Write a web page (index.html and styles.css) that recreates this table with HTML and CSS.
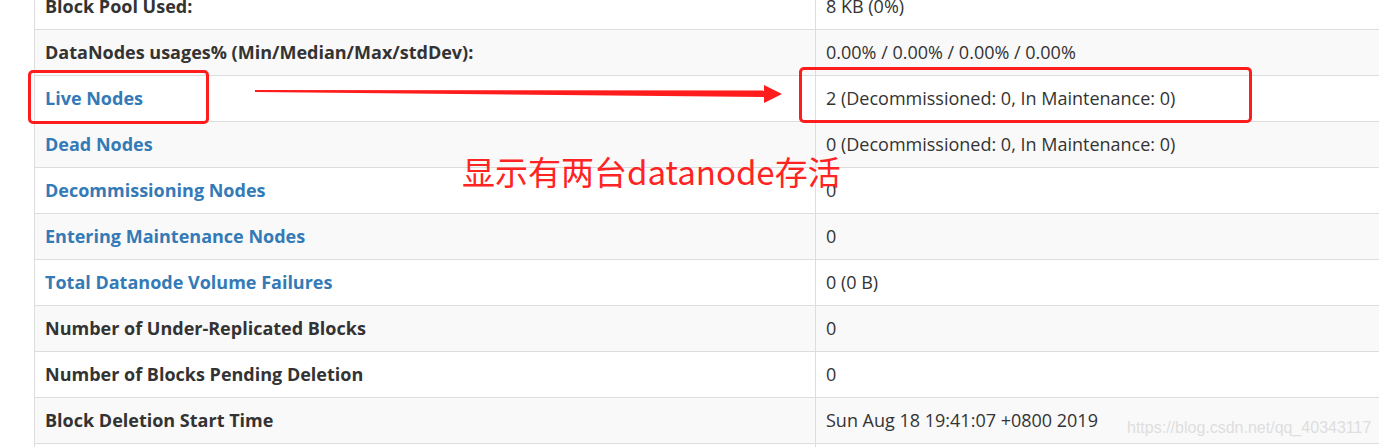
FILE: index.html
```html
<!DOCTYPE html>
<html lang="en">
<head>
    <meta charset="UTF-8">
    <title>Namenode information</title>
    <link rel="stylesheet" href="styles.css">
</head>
<body>
    <div class="page">
        <table class="summary">
            <tr><th>Block Pool Used:</th><td>8 KB (0%)</td></tr>
            <tr><th>DataNodes usages% (Min/Median/Max/stdDev):</th><td>0.00% / 0.00% / 0.00% / 0.00%</td></tr>
            <tr><th><a href="#tab-datanode">Live Nodes</a></th><td>2 (Decommissioned: 0, In Maintenance: 0)</td></tr>
            <tr><th><a href="#tab-datanode">Dead Nodes</a></th><td>0 (Decommissioned: 0, In Maintenance: 0)</td></tr>
            <tr><th><a href="#tab-datanode">Decommissioning Nodes</a></th><td>0</td></tr>
            <tr><th><a href="#tab-datanode">Entering Maintenance Nodes</a></th><td>0</td></tr>
            <tr><th><a href="#tab-datanode-volume-failures">Total Datanode Volume Failures</a></th><td>0 (0 B)</td></tr>
            <tr><th>Number of Under-Replicated Blocks</th><td>0</td></tr>
            <tr><th>Number of Blocks Pending Deletion</th><td>0</td></tr>
            <tr><th>Block Deletion Start Time</th><td>Sun Aug 18 19:41:07 +0800 2019</td></tr>
            <tr><th>Last Checkpoint Time</th><td>Sun Aug 18 19:41:07 +0800 2019</td></tr>
        </table>

        <!-- annotations drawn over the screenshot -->
        <div class="mark mark-label"></div>
        <div class="mark mark-value"></div>
        <svg class="arrow" width="1379" height="447" viewBox="0 0 1379 447">
            <polygon points="255,90 765,90.5 765,97 255,92" fill="#ff1c1c"/>
            <polygon points="764,85 782,94 764,103" fill="#ff1c1c"/>
        </svg>
        <div class="note">显示有两台datanode存活</div>
        <div class="watermark">https://blog.csdn.net/qq_40343117</div>
    </div>
</body>
</html>
```

FILE: styles.css
```css
* {
    box-sizing: border-box;
    margin: 0;
    padding: 0;
}

body {
    font-family: "Open Sans", "Noto Sans", sans-serif;
    color: #333;
    background: #fff;
    overflow: hidden;
}

a {
    color: #337ab7;
    text-decoration: none;
}

.page {
    position: relative;
    height: 447px;
    overflow: hidden;
    padding-left: 34px;
}

/* Bordered + striped table */
.summary {
    border-collapse: collapse;
    width: 1420px;
    margin-top: -17px;
}

.summary th,
.summary td {
    border: 1px solid #ddd;
    padding: 10px;
    font-size: 18px;
    line-height: 25px;
    text-align: left;
    vertical-align: top;
    white-space: nowrap;
}

.summary th {
    width: 781px;
    font-weight: 700;
}

.summary td {
    font-weight: 400;
}

.summary tr:nth-child(even) {
    background: #f9f9f9;
}

/* Red annotations */
.mark {
    position: absolute;
    border: 3px solid #ff1c1c;
    border-radius: 5px;
}

.mark-label {
    left: 28px;
    top: 70px;
    width: 181px;
    height: 54px;
}

.mark-value {
    left: 799px;
    top: 67px;
    width: 453px;
    height: 56px;
}

.arrow {
    position: absolute;
    left: 0;
    top: 0;
}

.note {
    position: absolute;
    left: 462px;
    top: 155px;
    font-family: "Noto Sans CJK SC", sans-serif;
    font-size: 33px;
    line-height: 33px;
    color: #ff2424;
}

.watermark {
    position: absolute;
    left: 1127px;
    top: 419px;
    font-family: "Liberation Sans", Arial, sans-serif;
    font-size: 16px;
    color: #dedede;
}
```
